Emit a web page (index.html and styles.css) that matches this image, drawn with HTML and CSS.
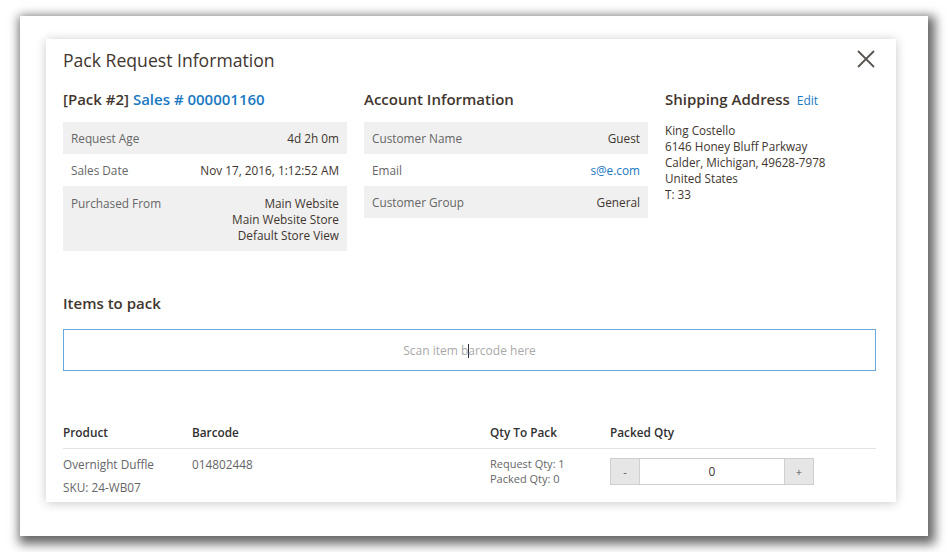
FILE: index.html
```html
<!DOCTYPE html>
<html>
<head>
<meta charset="utf-8">
<link rel="stylesheet" href="styles.css">
</head>
<body>
<div class="frame">
  <div class="modal">
    <header class="modal-header">
      <h1 class="modal-title">Pack Request Information</h1>
      <button class="close" aria-label="Close">
        <svg width="18" height="18" viewBox="0 0 18 18"><path d="M1 1L17 17M17 1L1 17" stroke="#5a5450" stroke-width="1.8" fill="none"/></svg>
      </button>
    </header>
    <div class="columns">
      <section class="col">
        <h2 class="sec-title">[Pack #2] <a class="link">Sales # 000001160</a></h2>
        <div class="info">
          <div class="row shade"><span class="lbl">Request Age</span><span class="val">4d 2h 0m</span></div>
          <div class="row"><span class="lbl">Sales Date</span><span class="val">Nov 17, 2016, 1:12:52 AM</span></div>
          <div class="row shade tall"><span class="lbl">Purchased From</span><span class="val">Main Website<br>Main Website Store<br>Default Store View</span></div>
        </div>
      </section>
      <section class="col">
        <h2 class="sec-title">Account Information</h2>
        <div class="info">
          <div class="row shade"><span class="lbl">Customer Name</span><span class="val">Guest</span></div>
          <div class="row"><span class="lbl">Email</span><span class="val link">s@e.com</span></div>
          <div class="row shade"><span class="lbl">Customer Group</span><span class="val">General</span></div>
        </div>
      </section>
      <section class="col">
        <h2 class="sec-title">Shipping Address <a class="edit">Edit</a></h2>
        <address class="addr">King Costello<br>6146 Honey Bluff Parkway<br>Calder, Michigan, 49628-7978<br>United States<br>T: 33</address>
      </section>
    </div>
    <h2 class="sec-title items-title">Items to pack</h2>
    <div class="scan"><span class="ph">Scan item b<span class="caret"></span>arcode here</span></div>
    <div class="grid head">
      <div>Product</div><div>Barcode</div><div>Qty To Pack</div><div>Packed Qty</div>
    </div>
    <div class="grid item">
      <div><div class="pname">Overnight Duffle</div><div class="sku">SKU: 24-WB07</div></div>
      <div class="bc">014802448</div>
      <div class="qty">Request Qty: 1<br>Packed Qty: 0</div>
      <div class="ctrl"><span class="btn">-</span><span class="num">0</span><span class="btn">+</span></div>
    </div>
  </div>
</div>
</body>
</html>
```
FILE: styles.css
```css
* { box-sizing: border-box; }
html, body { margin: 0; padding: 0; background: #ffffff; }
body { font-family: "Open Sans", "Liberation Sans", sans-serif; color: #303030; width: 948px; height: 552px; overflow: hidden; padding: 16px 0 0 20px; }
.frame {
  width: 908px; height: 520px; background: #fff;
  box-shadow: 3px 4px 10px 4px rgba(0,0,0,0.6);
  padding: 23px 0 0 26px;
}
.modal {
  width: 850px; height: 463px; background: #fff; overflow: hidden;
  box-shadow: 0 1px 10px rgba(0,0,0,0.22);
  padding: 0 20px 0 17px;
}
.modal-header { display: flex; justify-content: space-between; align-items: flex-start; padding-top: 10px; }
.modal-title { margin: 0; font-size: 17.6px; font-weight: 400; line-height: 22px; color: #41362f; }
.close { border: 0; background: none; padding: 0; margin: 1px 1px 0 0; width: 18px; height: 18px; display: block; }
.close svg { display: block; }
.columns { display: grid; grid-template-columns: 284px 284px 1fr; column-gap: 17px; margin-top: 18px; }
.sec-title { margin: 0; font-size: 15px; font-weight: 600; line-height: 20px; color: #41362f; }
.link { color: #1979c3; text-decoration: none; }
.edit { color: #1979c3; font-size: 12px; font-weight: 400; margin-left: 3px; }
.info { margin-top: 13px; font-size: 11.8px; line-height: 16px; }
.row { display: flex; justify-content: space-between; padding: 8px 8px; }
.row.tall { padding-top: 9px; }
.shade { background: #f0f0f0; }
.lbl { color: #666; }
.val { text-align: right; color: #41362f; }
.val.link { color: #1979c3; }
.addr { font-style: normal; margin-top: 11px; font-size: 11.7px; line-height: 16px; color: #41362f; }
.items-title { margin-top: 42px; }
.scan {
  margin-top: 16px; height: 42px; border: 1px solid #68a8e0;
  display: flex; align-items: center; justify-content: center;
  font-size: 12px; color: #a9a9a9;
}
.ph { padding-top: 1px; }
.caret { display: inline-block; width: 1px; height: 14px; background: #303030; vertical-align: -3px; margin-right: -1px; }
.grid { display: grid; grid-template-columns: 129px 298px 120px 1fr; font-size: 11.8px; line-height: 16px; }
.head { margin-top: 41px; padding: 12px 0 8px; border-bottom: 1px solid #e3e3e3; font-weight: 600; color: #303030; }
.item { padding-top: 7px; color: #666; }
.sku { margin-top: 7px; }
.bc { color: #666; }
.qty { font-size: 11px; line-height: 15px; }
.ctrl { display: flex; width: 204px; height: 27px; margin-top: 2px; }
.btn { width: 30px; background: #e6e6e6; border: 1px solid #cfcfcf; display: flex; align-items: center; justify-content: center; color: #555; font-size: 11px; }
.num { flex: 1; border-top: 1px solid #cfcfcf; border-bottom: 1px solid #cfcfcf; display: flex; align-items: center; justify-content: center; color: #41362f; font-size: 12px; }
```
